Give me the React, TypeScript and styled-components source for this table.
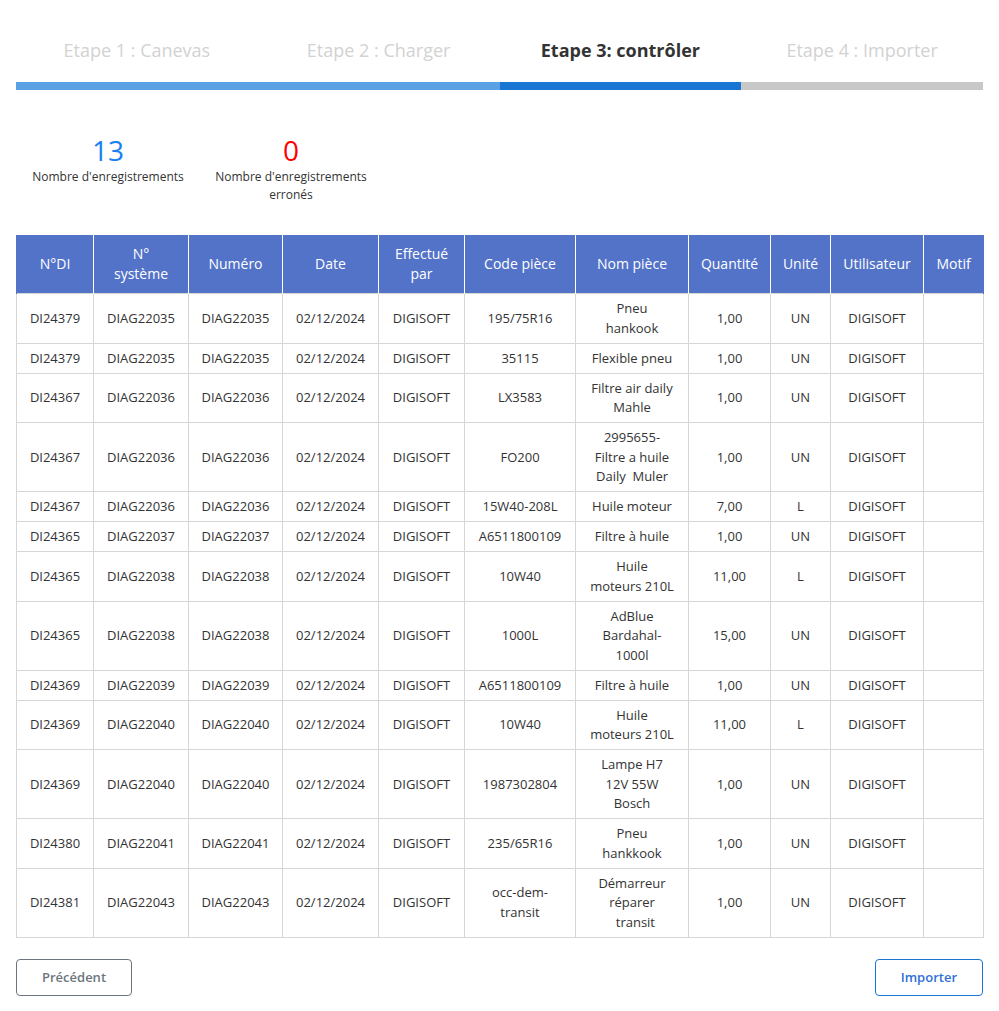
import React from "react";
import styled, { createGlobalStyle } from "styled-components";

const GlobalStyle = createGlobalStyle`
  html, body { margin: 0; padding: 0; background: #fff; }
  body { font-family: "Open Sans", "Liberation Sans", sans-serif; color: #333; }
  * { box-sizing: border-box; }
`;

const Page = styled.div`
  padding: 37px 16px 14px;
`;

const Steps = styled.div`
  display: grid;
  grid-template-columns: repeat(4, 1fr);
`;

type StepState = "done" | "active" | "todo";

const Step = styled.div<{ $state: StepState }>`
  text-align: center;
  font-size: 18px;
  line-height: 27px;
  padding-bottom: 18px;
  font-weight: ${(p) => (p.$state === "active" ? 700 : 400)};
  color: ${(p) => (p.$state === "active" ? "#333" : "#d2d2d2")};
  border-bottom: 8px solid
    ${(p) => (p.$state === "done" ? "#5aa2e4" : p.$state === "active" ? "#1976d2" : "#c8c8c8")};
`;

const Stats = styled.div`
  display: flex;
  gap: 23px;
  padding-left: 12px;
  margin-top: 42px;
`;

const Stat = styled.div`
  width: 160px;
  text-align: center;
`;

const StatValue = styled.div<{ $color: string }>`
  font-size: 28px;
  line-height: 36px;
  color: ${(p) => p.$color};
`;

const StatLabel = styled.div`
  font-size: 12px;
  line-height: 18px;
  color: #333;
`;

const Table = styled.table`
  margin-top: 31px;
  width: 100%;
  border-collapse: collapse;
  table-layout: fixed;
  font-size: 13px;
`;

const Th = styled.th`
  background: #5373c9;
  color: #fff;
  font-weight: 400;
  font-size: 14px;
  line-height: 20px;
  padding: 9px 4px;
  white-space: pre-line;
  border-left: 1px solid #fff;
  border-right: 1px solid #fff;
  text-align: center;
  &:first-child { border-left: 1px solid #5373c9; }
  &:last-child { border-right: 1px solid #5373c9; }
`;

const Td = styled.td`
  border: 1px solid #d6d6d6;
  padding: 5px 4px 4.5px;
  line-height: 19.5px;
  text-align: center;
  vertical-align: middle;
  white-space: pre-wrap;
  color: #333;
`;

const Actions = styled.div`
  display: flex;
  justify-content: space-between;
  margin-top: 21px;
`;

const Button = styled.button<{ $primary?: boolean }>`
  font-family: "Open Sans", "Liberation Sans", sans-serif;
  font-size: 13px;
  font-weight: 600;
  line-height: 19px;
  padding: 8px 25px;
  background: #fff;
  border-radius: 4px;
  border: 1px solid ${(p) => (p.$primary ? "#1976d2" : "#6c757d")};
  color: ${(p) => (p.$primary ? "#2f6fd8" : "#6c757d")};
  cursor: pointer;
`;

const columns: { label: string; width: number }[] = [
  { label: "N°DI", width: 77 },
  { label: "N°\nsystème", width: 95 },
  { label: "Numéro", width: 94 },
  { label: "Date", width: 96 },
  { label: "Effectué\npar", width: 86 },
  { label: "Code pièce", width: 111 },
  { label: "Nom pièce", width: 113 },
  { label: "Quantité", width: 82 },
  { label: "Unité", width: 60 },
  { label: "Utilisateur", width: 93 },
  { label: "Motif", width: 60 },
];

type Row = { di: string; sys: string; code: string; nom: string; qty: string; unit: string };

const rows: Row[] = [
  { di: "DI24379", sys: "DIAG22035", code: "195/75R16", nom: "Pneu\nhankook", qty: "1,00", unit: "UN" },
  { di: "DI24379", sys: "DIAG22035", code: "35115", nom: "Flexible pneu", qty: "1,00", unit: "UN" },
  { di: "DI24367", sys: "DIAG22036", code: "LX3583", nom: "Filtre air daily\nMahle", qty: "1,00", unit: "UN" },
  { di: "DI24367", sys: "DIAG22036", code: "FO200", nom: "2995655-\nFiltre a huile\nDaily  Muler", qty: "1,00", unit: "UN" },
  { di: "DI24367", sys: "DIAG22036", code: "15W40-208L", nom: "Huile moteur", qty: "7,00", unit: "L" },
  { di: "DI24365", sys: "DIAG22037", code: "A6511800109", nom: "Filtre à huile", qty: "1,00", unit: "UN" },
  { di: "DI24365", sys: "DIAG22038", code: "10W40", nom: "Huile\nmoteurs 210L", qty: "11,00", unit: "L" },
  { di: "DI24365", sys: "DIAG22038", code: "1000L", nom: "AdBlue\nBardahal-\n1000l", qty: "15,00", unit: "UN" },
  { di: "DI24369", sys: "DIAG22039", code: "A6511800109", nom: "Filtre à huile", qty: "1,00", unit: "UN" },
  { di: "DI24369", sys: "DIAG22040", code: "10W40", nom: "Huile\nmoteurs 210L", qty: "11,00", unit: "L" },
  { di: "DI24369", sys: "DIAG22040", code: "1987302804", nom: "Lampe H7\n12V 55W\nBosch", qty: "1,00", unit: "UN" },
  { di: "DI24380", sys: "DIAG22041", code: "235/65R16", nom: "Pneu\nhankkook", qty: "1,00", unit: "UN" },
  { di: "DI24381", sys: "DIAG22043", code: "occ-dem-\ntransit", nom: "Démarreur\nréparer\n  transit", qty: "1,00", unit: "UN" },
];

const steps: { label: string; state: StepState }[] = [
  { label: "Etape 1 : Canevas", state: "done" },
  { label: "Etape 2 : Charger", state: "done" },
  { label: "Etape 3: contrôler", state: "active" },
  { label: "Etape 4 : Importer", state: "todo" },
];

export default function App() {
  return (
    <Page>
      <GlobalStyle />
      <Steps>
        {steps.map((s) => (
          <Step key={s.label} $state={s.state}>
            {s.label}
          </Step>
        ))}
      </Steps>

      <Stats>
        <Stat>
          <StatValue $color="#1a7ff0">13</StatValue>
          <StatLabel>Nombre d'enregistrements</StatLabel>
        </Stat>
        <Stat>
          <StatValue $color="#ff0000">0</StatValue>
          <StatLabel>Nombre d'enregistrements erronés</StatLabel>
        </Stat>
      </Stats>

      <Table>
        <colgroup>
          {columns.map((c) => (
            <col key={c.label} style={{ width: c.width }} />
          ))}
        </colgroup>
        <thead>
          <tr>
            {columns.map((c) => (
              <Th key={c.label}>{c.label}</Th>
            ))}
          </tr>
        </thead>
        <tbody>
          {rows.map((r, i) => (
            <tr key={i}>
              <Td>{r.di}</Td>
              <Td>{r.sys}</Td>
              <Td>{r.sys}</Td>
              <Td>02/12/2024</Td>
              <Td>DIGISOFT</Td>
              <Td>{r.code}</Td>
              <Td>{r.nom}</Td>
              <Td>{r.qty}</Td>
              <Td>{r.unit}</Td>
              <Td>DIGISOFT</Td>
              <Td></Td>
            </tr>
          ))}
        </tbody>
      </Table>

      <Actions>
        <Button>Précédent</Button>
        <Button $primary>Importer</Button>
      </Actions>
    </Page>
  );
}
